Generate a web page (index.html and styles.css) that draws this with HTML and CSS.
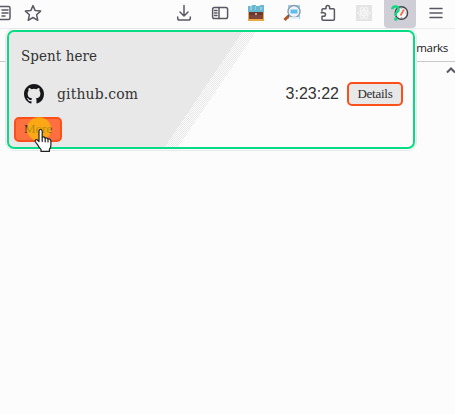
FILE: index.html
```html
<!DOCTYPE html>
<html lang="en">
<head>
<meta charset="utf-8">
<title>Spent here</title>
<link rel="stylesheet" href="styles.css">
</head>
<body>
<header class="toolbar">
  <div class="address-actions">
    <svg class="reader" width="15" height="18" viewBox="0 0 15 18"><rect x="-3" y="2.5" width="13" height="13" rx="1.5"/><path d="M2 6h6M2 9h6M2 12h3"/></svg>
    <svg width="18" height="18" viewBox="0 0 18 18"><path d="m9 1.6 2.2 5 5.4.5-4 3.7 1.2 5.5L9 13.5l-4.8 2.8 1.2-5.5-4-3.7 5.4-.5z"/></svg>
  </div>
  <div class="extensions">
    <span class="tool"><svg width="18" height="18" viewBox="0 0 18 18"><path d="M9 1.5v10M5 8l4 4 4-4M2.7 13v1.2q0 1.8 1.8 1.8h9q1.8 0 1.8-1.8V13"/></svg></span>
    <span class="tool"><svg width="18" height="18" viewBox="0 0 18 18"><rect x="1.6" y="3.6" width="15" height="11" rx="1.8"/><path d="M8 3.6v11M3.5 6.5H6M3.5 9H6M3.5 11.5H6"/></svg></span>
    <span class="tool"><svg class="picture chest" width="16" height="16" viewBox="0 0 16 16"><path fill="#eaa944" d="M0 6h16v10H0z"/><path fill="#68b8d1" d="M0 1h4V0h4v1h4V0h4v7H0z"/><path fill="#96cddd" d="M2 1h2v4H2zm5 0h1v4H7zm5 1h2v3h-2z"/><path fill="#653a36" d="M1 7h14v7H1z"/><path fill="#7c443b" d="M1 10h14v4H1z"/><path fill="#d6a16c" d="M7 8h2v2H7z"/></svg></span>
    <span class="tool"><svg class="picture" width="18" height="18" viewBox="0 0 18 18"><path fill="#9dcde9" d="M5 1h12v14H5z"/><path stroke="#a95721" stroke-width="3" d="m1.5 16 4-4"/><path stroke="#463c3b" stroke-width="1.5" d="m5 12 2-2"/><circle cx="11" cy="7.5" r="6" fill="#edf5fa" stroke="#8c9eaf"/><path fill="#60bce9" d="M7.5 5.5h7v4h-7z"/><path stroke="#fff" d="M6 14h10"/></svg></span>
    <span class="tool"><svg width="18" height="18" viewBox="0 0 18 18"><path d="M3 7.2V5.8q0-1 1-1h3V3.5q0-2 1.8-2t1.8 2v1.3h3.8q1 0 1 1v9.5q0 1-1 1H4q-1 0-1-1v-3h1.5q2 0 2-1.8t-2-1.8H2.2"/></svg></span>
    <span class="tool"><svg class="disabled" width="16" height="16" viewBox="0 0 16 16"><path class="tile" d="M0 0h16v16H0z"/><ellipse cx="8" cy="8" rx="6" ry="2.4"/><ellipse cx="8" cy="8" rx="6" ry="2.4" transform="rotate(60 8 8)"/><ellipse cx="8" cy="8" rx="6" ry="2.4" transform="rotate(120 8 8)"/><circle cx="8" cy="8" r="1"/></svg></span>
    <span class="tool active"><svg class="picture" width="18" height="18" viewBox="0 0 18 18"><circle cx="10.4" cy="9" r="6.2" fill="#f7f4f5" stroke="#454249" stroke-width="1.4"/><path stroke="#aaa6ac" d="M10.5 4v1m4 4h1m-5 4v1"/><path stroke="#ed6e4c" stroke-width="1.8" d="m9.5 11.5 3.5-6"/><path stroke="#14d982" stroke-width="2.5" d="M1.3 5.2Q1.4 2.4 4.2 2.4q3.5 0 3.4 3Q7.5 7 6 8q-1.4 1-1.4 4"/><path fill="#14d982" d="M3.3 13.5h3v3.2h-3z"/></svg></span>
    <span class="tool menu"><svg width="14" height="18" viewBox="0 0 14 18"><path d="M1 4.5h12M1 9h12M1 13.5h12"/></svg></span>
  </div>
</header>
<div class="bookmarks">marks</div>
<div class="viewport"><svg width="12" height="10" viewBox="0 0 12 10"><path d="m2 7.5 4-4 4 4"/></svg></div>

<section class="popup">
  <h1>Spent here</h1>
  <div class="site">
    <svg class="github" width="20" height="20" viewBox="0 0 16 16"><path d="M8 0C3.58 0 0 3.58 0 8c0 3.54 2.29 6.53 5.47 7.59.4.07.55-.17.55-.38 0-.19-.01-.82-.01-1.49-2.01.37-2.53-.49-2.69-.94-.09-.23-.48-.94-.82-1.13-.28-.15-.68-.52-.01-.53.63-.01 1.08.58 1.23.82.72 1.21 1.87.87 2.33.66.07-.52.28-.87.51-1.07-1.78-.2-3.64-.89-3.64-3.95 0-.87.31-1.59.82-2.15-.08-.2-.36-1.02.08-2.12 0 0 .67-.21 2.2.82a7.7 7.7 0 0 1 4 0c1.53-1.04 2.2-.82 2.2-.82.44 1.1.16 1.92.08 2.12.51.56.82 1.27.82 2.15 0 3.07-1.87 3.75-3.65 3.95.29.25.54.73.54 1.48 0 1.07-.01 1.93-.01 2.2 0 .21.15.46.55.38A8 8 0 0 0 16 8c0-4.42-3.58-8-8-8z"/></svg>
    <span class="domain">github.com</span>
    <span class="time">3:23:22</span>
    <button class="details"><span>Details</span></button>
  </div>
  <button class="more"><span>More</span></button>
  <div class="click"></div>
  <svg class="pointer" width="19" height="25" viewBox="0 0 19 25"><path d="M5 13V3.3q0-1.8 1.6-1.8t1.6 1.8v6q2-.9 3 .8 2-.8 2.8.9 2.7-.5 2.9 2.2v4q0 2.2-1.5 4.2v2H7v-2q-2.1-2-3.1-4.2L1.4 14q-.8-1.7.6-2.3 1.3-.3 3 1.8z"/><path d="M8.2 9.5v4m3-3.2v3.5m2.8-2.5V14"/></svg>
</section>
</body>
</html>
```

FILE: styles.css
```css
* { box-sizing: border-box; }
body {
  margin: 0;
  width: 455px;
  height: 414px;
  overflow: hidden;
  background: #fcfcfc;
  color: #333;
  font-family: "DejaVu Serif Condensed", "DejaVu Serif", serif;
}
svg {
  display: block;
  flex: none;
  fill: none;
  stroke: #5a5963;
  stroke-width: 1.5;
  stroke-linecap: round;
  stroke-linejoin: round;
}
.toolbar {
  display: flex;
  justify-content: space-between;
  height: 29px;
  border-bottom: 1px solid #ececee;
}
.address-actions { display: flex; gap: 9px; padding-top: 4px; }
.extensions { display: flex; margin-right: 1px; }
.tool {
  display: flex;
  justify-content: center;
  width: 36px;
  height: 28px;
  padding-top: 4px;
}
.tool.active { width: 32px; margin: 0 2px; background: #cfced7; border-radius: 0 0 4px 4px; }
.picture { stroke: none; stroke-linecap: butt; }
.chest { margin-top: 1px; }
.disabled { stroke: #f7f7f7; stroke-width: 1; margin-top: 1px; }
.tile { fill: #e5e5e5; stroke: none; }
.bookmarks {
  height: 33px;
  padding: 11px 7px 0 0;
  border-bottom: 1px solid #c9c9cb;
  color: #17171a;
  font: 11.5px/16px "Open Sans", sans-serif;
  letter-spacing: -.3px;
  text-align: right;
}
.viewport { display: flex; justify-content: flex-end; margin-right: -2px; padding-top: 3px; }
.viewport svg { stroke-width: 2; stroke-linecap: butt; stroke-linejoin: miter; }

.popup {
  position: absolute;
  left: 7px;
  top: 30px;
  width: 408px;
  height: 119px;
  border: 2px solid #05dc84;
  border-radius: 7px;
  box-shadow: 0 0 0 1px #fcfcfc, 0 0 0 2px #e8e8ea;
  background:
    linear-gradient(124deg, #e8e8e8 48.4%, transparent 48.5%, transparent 51.2%, #fcfcfc 51.3%),
    conic-gradient(#e8e8e8 25%, #fcfcfc 0 50%, #e8e8e8 0 75%, #fcfcfc 0) 0 0 / 2px 2px;
}
h1 {
  margin: 14px 0 0 12px;
  font-size: 15px;
  font-weight: 400;
  line-height: 20px;
  letter-spacing: .07px;
}
.site { display: flex; align-items: center; height: 24px; margin: 16px 10px 0 15px; }
.github { fill: #17171a; stroke: none; }
.domain { margin-left: 13px; font-size: 15.5px; letter-spacing: .15px; }
.time { margin-left: auto; font: 16px/20px "Liberation Sans", sans-serif; }
button {
  display: block;
  height: 24px;
  padding: 0;
  border: 2px solid #fb5019;
  border-radius: 5px;
  background: #e8e8e8;
  color: #2d2d2d;
  font: 13px/18px "Liberation Serif", serif;
}
.details { width: 56px; margin-left: 8px; letter-spacing: -.25px; }
.more { width: 48px; height: 25px; margin: 11px 0 0 5px; padding-bottom: 2px; background: #ff7040; font-size: 13px; }
.click {
  position: absolute;
  left: 18px;
  top: 85px;
  width: 24px;
  height: 24px;
  border-radius: 50%;
  background: #fbc500a6;
}
.pointer {
  position: absolute;
  left: 25px;
  top: 96px;
  fill: #fff;
  stroke: #202020;
  stroke-width: 1.2;
}
```
